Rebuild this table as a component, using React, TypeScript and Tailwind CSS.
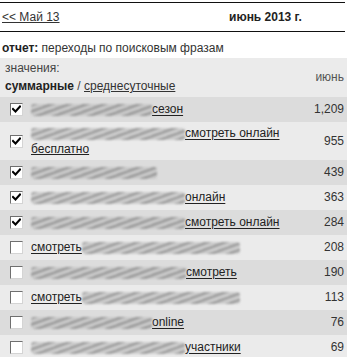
import React from "react";

type Part = { t: "b"; w: number } | { t: "a"; s: string } | { t: "br" };

const rows: { checked: boolean; parts: Part[]; n: string; tall?: boolean }[] = [
  { checked: true, parts: [{ t: "b", w: 121 }, { t: "a", s: "сезон" }], n: "1,209" },
  { checked: true, parts: [{ t: "b", w: 154 }, { t: "a", s: "смотреть онлайн" }, { t: "br" }, { t: "a", s: "бесплатно" }], n: "955", tall: true },
  { checked: true, parts: [{ t: "b", w: 126 }], n: "439" },
  { checked: true, parts: [{ t: "b", w: 154 }, { t: "a", s: "онлайн" }], n: "363" },
  { checked: true, parts: [{ t: "b", w: 154 }, { t: "a", s: "смотреть онлайн" }], n: "284" },
  { checked: false, parts: [{ t: "a", s: "смотреть" }, { t: "b", w: 158 }], n: "208" },
  { checked: false, parts: [{ t: "b", w: 155 }, { t: "a", s: "смотреть" }], n: "190" },
  { checked: false, parts: [{ t: "a", s: "смотреть" }, { t: "b", w: 158 }], n: "113" },
  { checked: false, parts: [{ t: "b", w: 121 }, { t: "a", s: "online" }], n: "76" },
  { checked: false, parts: [{ t: "b", w: 154 }, { t: "a", s: "участники" }], n: "69" },
];

function Box({ checked }: { checked: boolean }) {
  return (
    <div className="w-[13px] h-[13px] shrink-0 bg-white border border-t-[#6f6f6f] border-l-[#6f6f6f] border-r-[#d4d4d4] border-b-[#d4d4d4] flex items-center justify-center">
      {checked && (
        <svg width="9" height="9" viewBox="0 0 9 9">
          <path d="M1 4 L3.5 6.5 L8 1.5" stroke="#000" strokeWidth="2" fill="none" strokeLinecap="square" />
        </svg>
      )}
    </div>
  );
}

function Blur({ w }: { w: number }) {
  return (
    <span
      className="inline-block h-[12px] align-middle blur-[1px] opacity-80 bg-[repeating-linear-gradient(160deg,#8a8a8a_0px,#8a8a8a_2px,#c6c6c6_3px,#c6c6c6_6px)] rounded-[3px]"
      style={{ width: w }}
    />
  );
}

export default function App() {
  return (
    <div className="w-[347px] h-[357px] overflow-hidden bg-white text-[12px] leading-[15px] text-[#222] font-['Liberation_Sans',Arial,sans-serif] pt-[2px]">
      <div className="h-[30px] border-t border-b border-[#111] flex items-center pl-[2px] w-[345px]">
        <a className="underline text-[#333] w-[227px]">&lt;&lt; Май 13</a>
        <span className="font-bold text-[#222]">июнь 2013 г.</span>
      </div>
      <div className="pl-[2px] mt-[9px] h-[15px] text-[#333]">
        <span className="font-bold text-[#222]">отчет:</span> переходы по поисковым фразам
      </div>
      <div className="mt-[2px] bg-[#ebebeb] h-[39px] flex items-center justify-between pl-[5px] pr-[3px]">
        <div className="flex flex-col gap-[3px]">
          <span className="text-[#444]">значения:</span>
          <span>
            <b className="text-[#222]">суммарные</b> <span className="text-[#444]">/</span>{" "}
            <a className="underline text-[#333]">среднесуточные</a>
          </span>
        </div>
        <span className="text-[#555]">июнь</span>
      </div>
      {rows.map((r, i) => (
        <div
          key={i}
          className={`flex items-center pl-[10px] pr-[3px] ${r.tall ? "h-[38px]" : "h-[25px]"} ${i % 2 === 0 ? "bg-[#dcdcdc]" : "bg-[#ebebeb]"}`}
        >
          <Box checked={r.checked} />
          <div className="ml-[8px] flex-1 pt-[1px]">
            {r.parts.map((p, j) =>
              p.t === "b" ? (
                <Blur key={j} w={p.w} />
              ) : p.t === "br" ? (
                <br key={j} />
              ) : (
                <a key={j} className="underline text-[#222] align-middle">
                  {p.s}
                </a>
              )
            )}
          </div>
          <span className="text-[#333]">{r.n}</span>
        </div>
      ))}
    </div>
  );
}
